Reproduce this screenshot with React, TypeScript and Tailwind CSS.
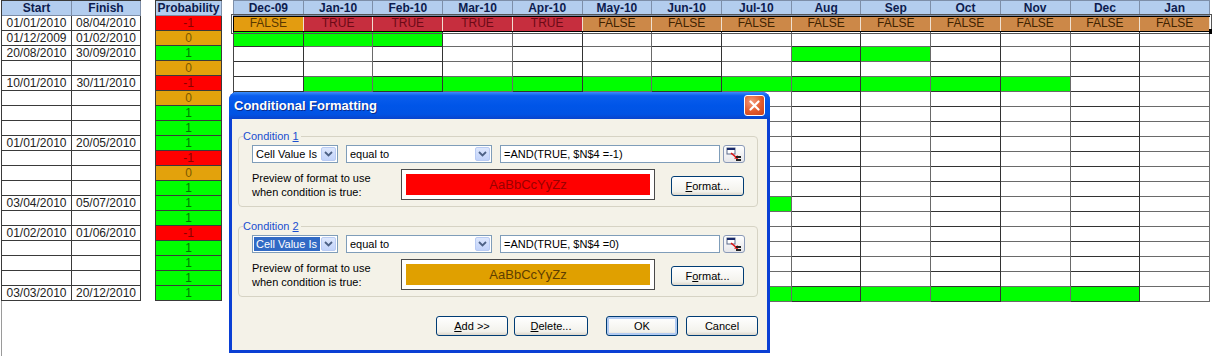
const months = [
  "Dec-09", "Jan-10", "Feb-10", "Mar-10", "Apr-10", "May-10", "Jun-10",
  "Jul-10", "Aug", "Sep", "Oct", "Nov", "Dec", "Jan",
];

const flags = [
  "FALSE", "TRUE", "TRUE", "TRUE", "TRUE", "FALSE", "FALSE",
  "FALSE", "FALSE", "FALSE", "FALSE", "FALSE", "FALSE", "FALSE",
];

const tasks: [string, string, number][] = [
  ["01/01/2010", "08/04/2010", -1],
  ["01/12/2009", "01/02/2010", 0],
  ["20/08/2010", "30/09/2010", 1],
  ["", "", 0],
  ["10/01/2010", "30/11/2010", -1],
  ["", "", 0],
  ["", "", 1],
  ["", "", 1],
  ["01/01/2010", "20/05/2010", 1],
  ["", "", -1],
  ["", "", 0],
  ["", "", 1],
  ["03/04/2010", "05/07/2010", 1],
  ["", "", 1],
  ["01/02/2010", "01/06/2010", -1],
  ["", "", 1],
  ["", "", 1],
  ["", "", 1],
  ["03/03/2010", "20/12/2010", 1],
];

// green spans per timeline row (rows under the TRUE/FALSE row)
const spans: ([number, number] | null)[] = [
  [0, 2], [8, 9], null, [1, 11], null, null, null, [1, 5], null, null,
  null, [4, 7], null, [2, 6], null, null, null, [3, 12],
];

const sheetFont = "font-['Liberation_Sans',Arial,sans-serif]";
const dlgFont = "font-['Liberation_Sans',Tahoma,sans-serif]";

function probClass(p: number) {
  if (p === -1) return "bg-[#ff0000] text-[#8a0000]";
  if (p === 0) return "bg-[#e3a20c] text-[#7a5800]";
  return "bg-[#00ff00] text-[#007a00]";
}

function flagClass(f: string, i: number) {
  if (f === "TRUE") return "bg-[#c62e3e] text-[#6c0a16]";
  if (i === 0) return "bg-[#e39c10] text-[#5a3800]";
  return "bg-[#cc8848] text-[#3e2200]";
}

function Arrow() {
  return (
    <span className="m-[1px] flex w-[15px] items-center justify-center rounded-[2px] border border-[#b9cbf3] bg-[linear-gradient(180deg,#dde7fd,#c2d3fa)]">
      <svg width="9" height="6" viewBox="0 0 9 6">
        <polyline points="1,1 4.5,4.5 8,1" fill="none" stroke="#4d6185" strokeWidth="1.8" />
      </svg>
    </span>
  );
}

function XpButton({ children, w, focus }: { children: React.ReactNode; w: string; focus?: boolean }) {
  return (
    <div
      className={`${w} flex h-[20px] items-center justify-center rounded-[3px] border border-[#003c74] bg-[linear-gradient(180deg,#ffffff,#f3f2ec_80%,#dcd7cb)] text-[11px] text-black ${
        focus ? "shadow-[inset_0_0_0_2px_#b2cbf2]" : ""
      }`}
    >
      {children}
    </div>
  );
}

function RefIcon() {
  return (
    <svg width="16" height="14" viewBox="0 0 16 14">
      <rect x="1" y="1" width="8" height="6" fill="#fff" stroke="#5a6a8a" />
      <rect x="1" y="1" width="8" height="2" fill="#1a2a6a" />
      <line x1="5" y1="6" x2="11" y2="11" stroke="#e01010" strokeWidth="1.6" />
      <polygon points="12,12 8,11.5 11.5,8" fill="#e01010" />
      <rect x="10" y="9" width="5" height="2" fill="#222" />
      <rect x="10" y="12" width="5" height="2" fill="#222" />
    </svg>
  );
}

function Condition({
  n,
  formula,
  fill,
  ink,
  selected,
  fmt,
}: {
  n: string;
  formula: string;
  fill: string;
  ink: string;
  selected?: boolean;
  fmt: React.ReactNode;
}) {
  return (
    <div className="relative h-[71px] w-[520px] rounded-[4px] border border-[#d6d3c4] pl-[13px] pt-[8px]">
      <span className="absolute left-[4px] top-[-8px] bg-[#f4f2e8] pr-[2px] text-[11px] leading-[14px] text-[#1a4fd0]">
        Condition <span className="underline">{n}</span>
      </span>
      <div className="flex h-[18px] items-stretch text-[11px] text-black">
        <div className="flex w-[86px] border border-[#7f9db9] bg-white">
          <span className="flex flex-1 items-center">
            <span className={`my-[1px] ml-[1px] flex h-[14px] flex-1 items-center pl-[2px] ${selected ? "bg-[#316ac5] text-white" : ""}`}>
              Cell Value Is
            </span>
          </span>
          <Arrow />
        </div>
        <div className="ml-[8px] flex w-[146px] border border-[#7f9db9] bg-white">
          <span className="flex flex-1 items-center pl-[3px]">equal to</span>
          <Arrow />
        </div>
        <div className="ml-[8px] flex w-[220px] items-center border border-[#7f9db9] bg-white pl-[3px]">
          {formula}
        </div>
        <div className="ml-[3px] flex w-[22px] items-center justify-center rounded-[3px] border border-[#8a9ab8] bg-[linear-gradient(180deg,#ffffff,#e6e6ea)]">
          <RefIcon />
        </div>
      </div>
      <div className="mt-[6px] flex h-[31px] items-center">
        <div className="w-[149px] text-[11px] leading-[14px] text-black">
          Preview of format to use
          <br />
          when condition is true:
        </div>
        <div className="flex h-[31px] w-[254px] border border-[#4a4a4a] bg-white p-[4px]">
          <div className={`flex flex-1 items-center justify-center text-[13px] ${sheetFont} ${fill} ${ink}`}>
            AaBbCcYyZz
          </div>
        </div>
        <div className="ml-[16px] mt-[3px]">
          <XpButton w="w-[73px]">{fmt}</XpButton>
        </div>
      </div>
    </div>
  );
}

export default function App() {
  return (
    <div className={`relative flex h-[356px] w-[1212px] items-start overflow-hidden bg-white ${sheetFont}`}>
      {/* dates */}
      <div className="ml-[1px] flex h-full w-[140px] flex-col">
        <div className="grid grid-cols-[70px_69px] border-l border-t border-[#3a3a3a] text-[12px] leading-[14px]">
          <div className="h-[15px] border-b border-r border-[#7d8ea8] bg-[#b3cdee] text-center font-bold text-[#0d1c4e]">Start</div>
          <div className="h-[15px] border-b border-r border-[#7d8ea8] bg-[#b3cdee] text-center font-bold text-[#0d1c4e]">Finish</div>
          {tasks.map(([s, f], i) => (
            <div key={i} className="contents">
              <div className="h-[15px] border-b border-r border-[#3a3a3a] text-center text-[#222]">{s}</div>
              <div className="h-[15px] border-b border-r border-[#3a3a3a] text-center text-[#222]">{f}</div>
            </div>
          ))}
        </div>
        <div className="flex-1 border-l border-[#9a9a9a]" />
      </div>

      {/* probability */}
      <div className="ml-[14px] flex w-[67px] flex-col border-l border-t border-[#3a3a3a] text-[12px] leading-[14px]">
        <div className="h-[15px] border-b border-r border-[#7d8ea8] bg-[#b3cdee] text-center font-bold text-[#0d1c4e]">
          Probability
        </div>
        {tasks.map(([, , p], i) => (
          <div key={i} className={`h-[15px] border-b border-r border-[#3a3a3a] text-center ${probClass(p)}`}>
            {p}
          </div>
        ))}
      </div>

      {/* timeline */}
      <div className="ml-[11px] w-[977px] text-[12px] leading-[14px]">
        <div className="grid grid-cols-[repeat(14,minmax(0,1fr))] border-l border-t border-[#7d8ea8]">
          {months.map((m) => (
            <div key={m} className="h-[15px] border-b border-r border-[#7d8ea8] bg-[#b3cdee] text-center font-bold text-[#0d1c4e]">
              {m}
            </div>
          ))}
        </div>
        <div className="relative grid grid-cols-[repeat(14,minmax(0,1fr))] border-y border-l border-black outline outline-1 outline-offset-[1px] outline-[#555]">
          {flags.map((f, i) => (
            <div key={i} className={`h-[14px] border-r border-[#f0e0d0] text-center leading-[13px] ${flagClass(f, i)}`}>
              {f}
            </div>
          ))}
          <span className="absolute bottom-[-3px] right-[-4px] h-[5px] w-[5px] bg-black" />
        </div>
        <div className="grid grid-cols-[repeat(14,minmax(0,1fr))] border-l border-[#444]">
          {spans.map((sp, r) =>
            months.map((m, c) => (
              <div
                key={`${r}-${m}`}
                className={`h-[15px] border-b border-r ${c % 2 === 0 ? "border-[#333]" : "border-[#6a6a6a]"} ${
                  sp && c >= sp[0] && c <= sp[1] ? "bg-[#00ff00]" : "bg-white"
                }`}
              />
            ))
          )}
        </div>
      </div>

      {/* dialog */}
      <div className={`absolute left-[229px] top-[92px] flex h-[261px] w-[541px] flex-col rounded-t-[8px] bg-[#0a3fd4] ${dlgFont}`}>
        <div className="flex h-[27px] items-center justify-between rounded-t-[8px] bg-[linear-gradient(180deg,#3c8ffc_0%,#0a5ded_14%,#0055e8_50%,#0153e4_82%,#0a44cc_100%)] pl-[5px] pr-[5px]">
          <span className="text-[13px] font-bold text-white [text-shadow:1px_1px_0_#0b2a8a]">
            Conditional Formatting
          </span>
          <div className="flex h-[21px] w-[21px] items-center justify-center rounded-[3px] border border-white bg-[radial-gradient(circle_at_35%_30%,#f49a7a,#e25a2c_55%,#c8401a)]">
            <svg width="11" height="11" viewBox="0 0 11 11">
              <path d="M1.5 1.5 L9.5 9.5 M9.5 1.5 L1.5 9.5" stroke="#fff" strokeWidth="2.2" strokeLinecap="round" />
            </svg>
          </div>
        </div>
        <div className="mx-[3px] mb-[3px] flex flex-1 flex-col bg-[#f4f2e8] pl-[6px] pt-[17px]">
          <Condition
            n="1"
            formula="=AND(TRUE, $N$4 =-1)"
            fill="bg-[#ff0000]"
            ink="text-[#9a0000]"
            fmt={
              <>
                <span className="underline">F</span>ormat...
              </>
            }
          />
          <div className="mt-[19px]">
            <Condition
              n="2"
              formula="=AND(TRUE, $N$4 =0)"
              fill="bg-[#e0a000]"
              ink="text-[#5e3e00]"
              selected
              fmt={
                <>
                  F<span className="underline">o</span>rmat...
                </>
              }
            />
          </div>
          <div className="mt-[19px] flex pr-[9px] justify-end">
            <XpButton w="w-[72px]">
              <span className="underline">A</span>dd &gt;&gt;
            </XpButton>
            <div className="ml-[6px]">
              <XpButton w="w-[74px]">
                <span className="underline">D</span>elete...
              </XpButton>
            </div>
            <div className="ml-[18px]">
              <XpButton w="w-[72px]" focus>
                OK
              </XpButton>
            </div>
            <div className="ml-[8px]">
              <XpButton w="w-[72px]">Cancel</XpButton>
            </div>
          </div>
        </div>
      </div>
    </div>
  );
}
